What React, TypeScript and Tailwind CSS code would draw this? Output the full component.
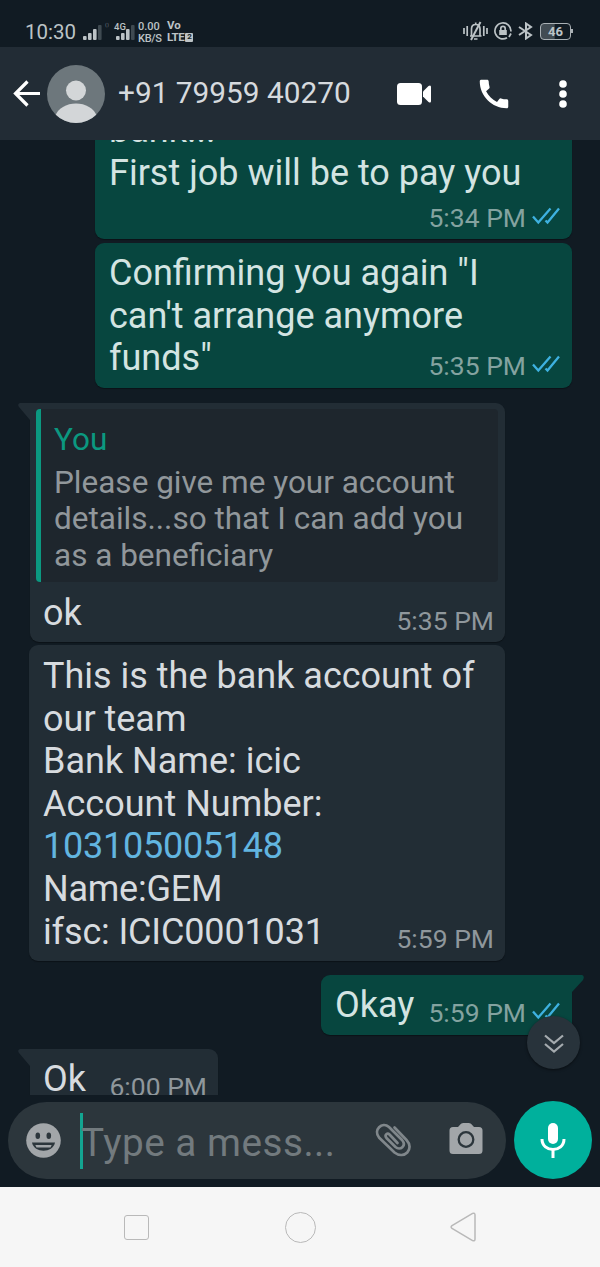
import type { ReactNode } from 'react';
import { MdCall } from 'react-icons/md';

interface BubbleProps {
  lines: ReactNode[];
  time: string;
  outgoing?: boolean;
  tail?: boolean;
  className?: string;
  timeClass?: string;
  quote?: ReactNode;
}

const accountLines: ReactNode[] = [
  'This is the bank account of',
  'our team',
  'Bank Name: icic',
  'Account Number:',
  <span className="tracking-[-0.25px] text-[#62b5e0]">103105005148</span>,
  <span className="tracking-[-0.25px]">Name:GEM</span>,
  <span className="tracking-[-0.15px]">ifsc: ICIC0001031</span>,
];

function Ticks() {
  return (
    <svg className="ml-[6px] mb-[8px] h-[18px] w-[28px]" viewBox="0 0 28 18" fill="none" stroke="#3eb1e0" strokeWidth="2.3">
      <path d="M1 9.5 L6.3 15.5 L18.5 1.5" />
      <path d="M13.5 13.5 L15.5 15.5 L27 1.5" />
    </svg>
  );
}

function Bubble({ lines, time, outgoing, tail, className = '', timeClass = '', quote }: BubbleProps) {
  const last = lines.length - 1;
  return (
    <div
      className={`relative rounded-[9px] text-[36px] leading-[42.6px] shadow-[0_1px_1px_rgba(0,0,0,0.35)] ${
        outgoing ? 'bg-[#07463f] pl-[14px] pr-[12px] text-[#d3e4e2]' : 'bg-[#222d35] pr-[11px] text-[#d7dbdf]'
      } ${className}`}
    >
      {tail && outgoing && (
        <svg className="absolute -right-3 top-0 h-[20px] w-[24px]" viewBox="0 0 24 20" fill="#07463f">
          <path d="M0 0 H22 Q25 1 23 5 L12 17 V20 H0 Z" />
        </svg>
      )}
      {tail && !outgoing && (
        <svg className="absolute -left-3 top-0 h-[20px] w-[24px]" viewBox="0 0 24 20" fill="#222d35">
          <path d="M24 0 H2 Q-1 1 1 4 L12 17 V20 H24 Z" />
        </svg>
      )}
      {quote}
      {lines.slice(0, last).map((line, i) => (
        <div key={i} className="whitespace-nowrap">{line}</div>
      ))}
      <div className="flex items-end justify-between">
        <span className="min-h-[42px] whitespace-nowrap">{lines[last]}</span>
        <span
          className={`flex items-end text-[26.5px] leading-[30px] whitespace-nowrap ${
            outgoing ? 'text-[#84a3a0]' : 'text-[#8f979c]'
          } ${timeClass}`}
        >
          {time}
          {outgoing && <Ticks />}
        </span>
      </div>
    </div>
  );
}

function Quote() {
  return (
    <div className="relative -ml-[7px] -mr-[4px] mb-[10px] h-[173px] overflow-hidden rounded-[4px] border-l-[5px] border-[#0b9880] bg-[#1e262d] pl-[13px] pt-[13px] text-[31.5px] leading-[36.7px] text-[#91979b]">
      <div className="mb-[6px] text-[#0b9880]">You</div>
      <div className="whitespace-nowrap">Please give me your account</div>
      <div className="whitespace-nowrap">details...so that I can add you</div>
      <div className="whitespace-nowrap">as a beneficiary</div>
    </div>
  );
}

function Signal() {
  return (
    <svg className="h-[15px] w-[19px]" viewBox="0 0 19 15" fill="#bcc3c6">
      <rect x="0" y="11" width="3.6" height="4" rx="1" />
      <rect x="5" y="8" width="3.6" height="7" rx="1" />
      <rect x="10" y="4" width="3.6" height="11" rx="1" />
      <rect x="15" y="0" width="3.6" height="15" rx="1" fill="#3f4a51" />
    </svg>
  );
}

function StatusBar() {
  return (
    <div className="flex h-[47px] items-start pl-[25px] pr-[27px] pt-[20px] text-[#bcc3c6]">
      <span className="w-[58px] text-[20.5px] leading-[25px]">10:30</span>
      <div className="mt-[5px]"><Signal /></div>
      <span className="ml-[3px] mt-[3px] w-[9px] text-[8px] leading-[8px] text-[#56616a]">⁽⁾</span>
      <div className="mt-[5px] flex w-[24px]">
        <span className="relative z-10 -mt-[3px] w-[2px] text-[9.5px] font-medium leading-[9px]">4G</span>
        <Signal />
      </div>
      <div className="mt-px w-[29px] text-[11px] font-medium leading-[11.5px]">
        <div className="whitespace-nowrap">0.00</div>
        <div className="whitespace-nowrap tracking-[-0.3px]">KB/S</div>
      </div>
      <div className="text-[11.5px] font-bold leading-[11.5px]">
        <div>Vo</div>
        <div className="flex items-center tracking-[-0.4px]">
          LTE
          <span className="ml-px flex h-[9px] w-[8px] items-center justify-center rounded-[1px] bg-[#bcc3c6] text-[8px] leading-[8px] text-[#111b23]">2</span>
        </div>
      </div>
      <div className="ml-auto flex items-center gap-[6px] pt-px">
        <svg className="h-[20px] w-[25px]" viewBox="0 0 25 20" fill="none" stroke="#bcc3c6" strokeWidth="1.7">
          <path d="M1 7 V13 M4.2 5 V15 M20.8 5 V15 M24 7 V13" />
          <path d="M7 15 H18.5 M8.5 15 V8 Q8.5 3.5 12.7 3.5 Q17 3.5 17 8 V15 M12.7 3.5 V1.5 M11 18 H14.5" />
          <path d="M8 19 L17.5 1" strokeWidth="2" />
        </svg>
        <svg className="h-[18px] w-[18px]" viewBox="0 0 18 18" fill="none" stroke="#bcc3c6" strokeWidth="1.7">
          <path d="M13 15.8 A8 8 0 1 1 16.9 9.5" />
          <path d="M15 15 L17 11.5" />
          <rect x="5.2" y="8" width="7.6" height="5" fill="#bcc3c6" stroke="none" />
          <path d="M6.8 8 V6.5 A2.2 2.2 0 0 1 11.2 6.5 V8" />
        </svg>
        <svg className="h-[18px] w-[15px]" viewBox="0 0 15 18" fill="none" stroke="#bcc3c6" strokeWidth="2">
          <path d="M1 5 L13 13 L8 16.5 V1.5 L13 5 L1 13" />
        </svg>
        <div className="ml-px flex items-center">
          <span className="flex h-[17px] w-[31px] items-center justify-center rounded-[4px] border border-[#aab1b5] bg-linear-to-r from-[#424c53] from-45% to-transparent to-50% text-[13px] font-bold leading-none">
            46
          </span>
          <span className="h-[4px] w-[2px] bg-[#aab1b5]" />
        </div>
      </div>
    </div>
  );
}

function Header() {
  return (
    <div className="flex h-[93px] items-center bg-[#222c35] pl-[13px] pr-[33px] text-white">
      <svg className="h-[27px] w-[28px]" viewBox="0 0 28 27" fill="none" stroke="white" strokeWidth="3.2">
        <path d="M14.5 1.5 L2.5 13.5 L14.5 25.5 M2.5 13.5 H27" />
      </svg>
      <svg className="ml-[6px] h-[58px] w-[58px]" viewBox="0 0 58 58">
        <clipPath id="face"><circle cx="29" cy="29" r="29" /></clipPath>
        <g clipPath="url(#face)">
          <rect width="58" height="58" fill="#6d777c" />
          <circle cx="29" cy="25.5" r="10" fill="#d3d6d8" />
          <path d="M8 52 C13 34 45 34 50 52 V58 H8 Z" fill="#d3d6d8" />
        </g>
      </svg>
      <span className="ml-[13px] flex-1 whitespace-nowrap text-[29.8px] text-[#d6dade]">+91 79959 40270</span>
      <svg className="mr-px h-[24px] w-[34px]" viewBox="0 0 34 24" fill="white">
        <rect x="0" y="1" width="25" height="22" rx="3.5" />
        <path d="M26 9.5 L31.5 4 Q34 2.5 34 5 V19 Q34 21.5 31.5 20 L26 14.5 Z" />
      </svg>
      <MdCall className="ml-[43px] h-[38px] w-[38px]" />
      <svg className="ml-[46px] h-[28px] w-[8px]" viewBox="0 0 8 28" fill="white">
        <circle cx="4" cy="4" r="3.8" />
        <circle cx="4" cy="14" r="3.8" />
        <circle cx="4" cy="24" r="3.8" />
      </svg>
    </div>
  );
}

function Composer() {
  return (
    <div className="flex h-[92px] items-start gap-[8px] pl-[8px] pt-[6px]">
      <div className="mt-px flex h-[77px] w-[498px] items-center rounded-full bg-[#2c363c] pl-[18px] pr-[23px]">
        <svg className="h-[35px] w-[35px]" viewBox="0 0 35 35" fill="#a2a6a9">
          <circle cx="17.5" cy="17.5" r="17.3" />
          <g fill="#2c363c">
            <ellipse cx="11.8" cy="12.8" rx="2.3" ry="3.3" />
            <ellipse cx="22.8" cy="12.8" rx="2.3" ry="3.3" />
            <path d="M6 19.5 H29 C27 30.5 8 30.5 6 19.5 Z" />
          </g>
          <path d="M9.3 22 H25.7 L24.5 24.5 H10.5 Z" />
        </svg>
        <span className="ml-[19px] h-[56px] w-[3px] bg-[#13a591]" />
        <span className="-ml-[2px] mt-[4px] flex-1 whitespace-nowrap text-[38.7px] leading-[46px] tracking-[0.5px] text-[#727a7e]">Type a mess...</span>
        <svg className="mr-[38px] h-[35px] w-[36px]" viewBox="0 0 36 35" fill="none" stroke="#80878b" strokeWidth="2.7" strokeLinecap="round">
          <path d="M19.5 4.5 L31.5 17 C40 26 29 37 19.5 29.5 L4 14.5 C-2 7 7 -2 14 4 L27 17 C32 23 25 28 20.5 24 L11.5 15 C9 11.5 12.5 9.5 14.5 11.5 L22.5 20" />
        </svg>
        <svg className="-mt-[4px] h-[33px] w-[34px]" viewBox="0 0 34 33">
          <path d="M4 5 H9 L12 1.8 Q13 1 14.5 1 H19.5 Q21 1 22 1.8 L25 5 H30 Q33.5 5 33.5 8.5 V28.5 Q33.5 32 30 32 H4 Q.5 32 .5 28.5 V8.5 Q.5 5 4 5 Z" fill="#a2a6a9" />
          <circle cx="17" cy="17.5" r="7.3" fill="#a2a6a9" stroke="#2c363c" strokeWidth="2.3" />
        </svg>
      </div>
      <div className="flex h-[78px] w-[78px] items-center justify-center rounded-full bg-[#00b09c]">
        <svg className="h-[35px] w-[26px]" viewBox="0 0 26 35" fill="none" stroke="white" strokeWidth="3">
          <rect x="8" y="0" width="10" height="21" rx="5" fill="white" stroke="none" />
          <path d="M2 16 C2 30 24 30 24 16 M13 26 V35" />
        </svg>
      </div>
    </div>
  );
}

function NavBar() {
  return (
    <div className="flex h-[80px] items-center justify-between bg-[#f6f6f6] pl-[124px] pr-[124px]">
      <span className="h-[25px] w-[25px] rounded-[3px] border-[1.5px] border-[#b9b9b9]" />
      <span className="ml-px h-[31px] w-[31px] rounded-full border-[1.5px] border-[#b9b9b9]" />
      <svg className="h-[30px] w-[26px]" viewBox="0 0 26 30" fill="none" stroke="#b9b9b9" strokeWidth="1.5" strokeLinejoin="round">
        <path d="M2 13.6 L22.6 1.4 Q25 .5 25 3 V27 Q25 29.5 22.6 28.6 L2 16.4 Q.2 15 2 13.6 Z" />
      </svg>
    </div>
  );
}

export default function App() {
  return (
    <div className="flex h-[1267px] w-[600px] flex-col overflow-hidden bg-[#111b23] font-['Roboto',sans-serif]">
      <StatusBar />
      <Header />

      <div className="relative flex h-[955px] flex-col overflow-hidden">
        <Bubble
          outgoing
          lines={['bank...', 'First job will be to pay you', '']}
          time="5:34 PM"
          className="-mt-[40px] ml-[95px] h-[139px] w-[477px] shrink-0 pt-[9px]"
          timeClass="mb-[3px]"
        />
        <Bubble
          outgoing
          lines={['Confirming you again "I', "can't arrange anymore", 'funds"']}
          time="5:35 PM"
          className="mt-[4px] ml-[95px] h-[145px] w-[477px] shrink-0 pt-[9px]"
          timeClass="-mb-px"
        />
        <Bubble
          tail
          quote={<Quote />}
          lines={['ok']}
          time="5:35 PM"
          className="mt-[15px] ml-[30px] h-[239px] w-[475px] shrink-0 pt-[6px] pl-[13px]"
          timeClass="-mb-px"
        />
        <Bubble
          lines={accountLines}
          time="5:59 PM"
          className="mt-[3px] ml-[29px] h-[316px] w-[476px] shrink-0 pt-[10px] pl-[14px]"
          timeClass="-mb-px"
        />
        <Bubble
          outgoing
          tail
          lines={['Okay']}
          time="5:59 PM"
          className="mt-[14px] ml-[321px] h-[60px] w-[251px] shrink-0 pt-[9px]"
          timeClass="-mb-px"
        />
        <Bubble
          tail
          lines={['Ok']}
          time="6:00 PM"
          className="mt-[14px] ml-[30px] h-[60px] w-[188px] shrink-0 pt-[9px] pl-[13px]"
          timeClass="-mb-px"
        />

        {/* scroll to bottom */}
        <div className="absolute right-[20px] top-[876px] flex h-[53px] w-[53px] items-center justify-center rounded-full bg-[#28333b] shadow-[0_1px_3px_rgba(0,0,0,0.5)]">
          <svg className="mt-[2px] h-[19px] w-[20px]" viewBox="0 0 20 19" fill="none" stroke="#a5abaf" strokeWidth="2.2">
            <path d="M1 1.5 L10 9 L19 1.5 M1 10 L10 17.5 L19 10" />
          </svg>
        </div>
      </div>

      <Composer />
      <NavBar />
    </div>
  );
}
